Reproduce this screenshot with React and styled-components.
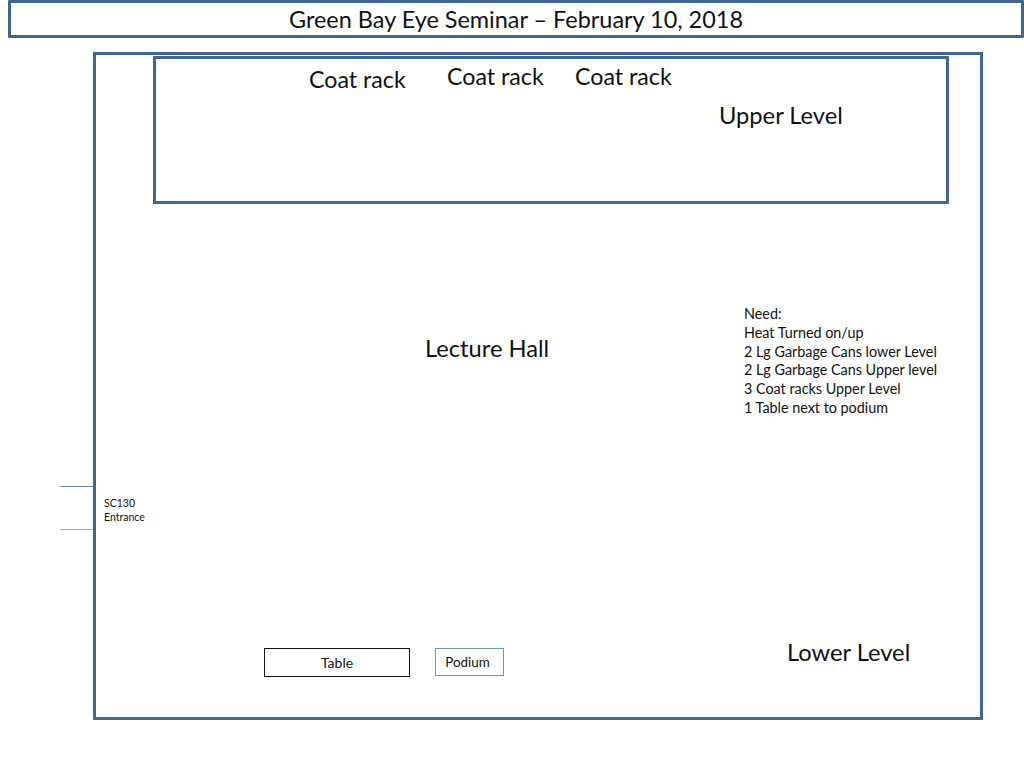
import React from 'react';
import styled, { createGlobalStyle } from 'styled-components';

const GlobalStyle = createGlobalStyle`
    html, body {
        margin: 0;
        padding: 0;
        background: #fff;
    }
    body {
        width: 1024px;
        height: 768px;
        overflow: hidden;
        font-family: "Lato", "Open Sans", sans-serif;
        color: #111;
    }
`;

const Slide = styled.div`
    width: 1024px;
    height: 768px;
    display: flex;
    flex-direction: column;
    align-items: flex-start;
`;

const TitleBar = styled.header`
    box-sizing: border-box;
    width: 1016px;
    height: 38px;
    margin-left: 8px;
    border: 3px solid #41658f;
    border-radius: 1px;
    display: flex;
    align-items: center;
    justify-content: center;
    font-size: 23.45px;
`;

const Hall = styled.main`
    box-sizing: border-box;
    width: 890px;
    height: 668px;
    margin: 14px 0 0 93px;
    border: 3px solid #41658f;
    border-radius: 1px;
    padding-top: 1px;
    display: flex;
    flex-direction: column;
`;

const UpperLevel = styled.section`
    box-sizing: border-box;
    height: 148px;
    margin: 0 31px 0 57px;
    border: 3px solid #41658f;
    border-radius: 1px;
    padding: 3px 0 0 153px;
    display: grid;
    grid-template-columns: 138px 128px 144px auto;
    align-items: start;
`;

const Label = styled.span`
    font-size: ${p => p.$size || 23.7}px;
    line-height: 28px;
    white-space: nowrap;
    margin-top: ${p => p.$offset || 0}px;
`;

const MiddleRow = styled.section`
    margin-top: 101px;
    padding-left: 329px;
    display: grid;
    grid-template-columns: 319px auto;
    align-items: start;
`;

const NeedList = styled.ul`
    margin: 0;
    padding: 0;
    list-style: none;
    font-size: 14.35px;
    line-height: 18.8px;
    white-space: nowrap;
`;

const Entrance = styled.div`
    position: relative;
    margin: 78.2px 0 0 8px;
    width: 60px;
    font-size: 10.5px;
    line-height: 14px;
`;

const DoorLine = styled.div`
    position: absolute;
    left: -44px;
    top: ${p => p.$y}px;
    width: 33px;
    height: 1px;
    background: ${p => p.$color};
`;

const BottomRow = styled.section`
    margin-top: 114px;
    padding-left: 168px;
    display: grid;
    grid-template-columns: 171px 352px auto;
    align-items: start;
`;

const FloorBox = styled.div`
    box-sizing: border-box;
    margin-top: 10px;
    width: ${p => p.$width}px;
    height: ${p => p.$height}px;
    border: 1px solid ${p => p.$color};
    padding-right: ${p => p.$inset || 0}px;
    display: flex;
    align-items: center;
    justify-content: center;
    font-size: ${p => p.$size}px;
`;

const needs = [
    'Need:',
    'Heat Turned on/up',
    '2 Lg Garbage Cans lower Level',
    '2 Lg Garbage Cans Upper level',
    '3 Coat racks Upper Level',
    '1 Table next to podium',
];

export default function App() {
    return (
        <Slide>
            <GlobalStyle />
            <TitleBar>Green Bay Eye Seminar – February 10, 2018</TitleBar>
            <Hall>
                <UpperLevel>
                    <Label $size={23.2} $offset={3}>Coat rack</Label>
                    <Label $size={23.2}>Coat rack</Label>
                    <Label $size={23.2}>Coat rack</Label>
                    <Label $offset={39}>Upper Level</Label>
                </UpperLevel>
                <MiddleRow>
                    <Label $offset={29}>Lecture Hall</Label>
                    <NeedList>
                        {needs.map((need, key) => <li key={key}>{need}</li>)}
                    </NeedList>
                </MiddleRow>
                <Entrance>
                    <DoorLine $y={-10} $color="#5b84b1" />
                    <DoorLine $y={33} $color="#8fb0d3" />
                    SC130<br />Entrance
                </Entrance>
                <BottomRow>
                    <FloorBox $width={146} $height={29} $color="#111" $size={14}>Table</FloorBox>
                    <FloorBox $width={69} $height={28} $color="#6d97c0" $size={13.4} $inset={4}>Podium</FloorBox>
                    <Label>Lower Level</Label>
                </BottomRow>
            </Hall>
        </Slide>
    );
}
